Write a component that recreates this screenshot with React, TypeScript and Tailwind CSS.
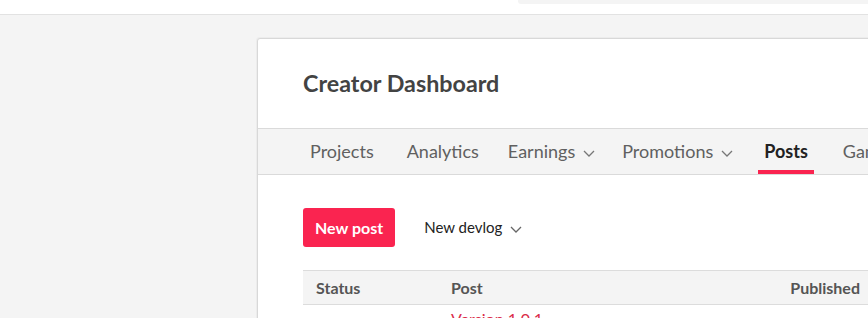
const Chevron = ({ className = "" }: { className?: string }) => (
  <svg width="12" height="7" viewBox="0 0 12 7" className={className} fill="none">
    <polyline points="1,1 6,6 11,1" stroke="currentColor" strokeWidth="1.3" />
  </svg>
);

const navItems = [
  { label: "Projects", space: "ml-0" },
  { label: "Analytics", space: "ml-[21px]" },
  { label: "Earnings", space: "ml-[17px]", menu: true },
  { label: "Promotions", space: "ml-[15px]", menu: true },
  { label: "Posts", space: "ml-[19px]", active: true },
  { label: "Game jams", space: "ml-[23px]" },
];

export default function App() {
  return (
    <div
      className="w-[868px] h-[318px] overflow-hidden bg-[#f4f4f4]"
      style={{ fontFamily: "Lato, 'Liberation Sans', sans-serif" }}
    >
      <header className="h-[15px] bg-white border-b border-[#e2e2e2] flex">
        <div className="ml-[518px] flex-1 h-[4px] bg-[#f4f4f4] rounded-bl-[3px]" />
      </header>

      <section className="ml-[257px] mt-[23px] w-[720px] bg-white border border-[#d8d8d8] rounded-[3px] shadow-[0_0_0_1px_#ececec]">
        <div className="h-[89px] flex items-center pl-[45px]">
          <h1 className="text-[23.3px] font-bold text-[#434343] pb-[1px]">Creator Dashboard</h1>
        </div>

        <nav className="h-[47px] bg-[#f4f4f4] border-y border-[#dadada] flex items-stretch pl-[46px] text-[18px] text-[#606060]">
          {navItems.map((item) => (
            <div
              key={item.label}
              className={`relative flex items-center gap-[8px] px-[6px] whitespace-nowrap ${item.space} ${
                item.active ? "font-bold text-[#222]" : ""
              }`}
            >
              {item.label}
              {item.menu && <Chevron className="text-[#777] mt-[3px]" />}
              {item.active && (
                <span className="absolute left-0 right-0 bottom-0 h-[4px] bg-[#fa2450]" />
              )}
            </div>
          ))}
        </nav>

        <div className="pl-[45px] pt-[33px]">
          <div className="flex items-center gap-[29px]">
            <button className="h-[39px] px-[12px] rounded-[3px] bg-[#fa2450] text-white font-bold text-[16px]">
              New post
            </button>
            <button className="flex items-center gap-[8px] text-[15px] text-[#222]">
              New devlog
              <Chevron className="text-[#666] mt-[3px]" />
            </button>
          </div>

          <table className="mt-[23px] w-[565px] border-collapse text-[16px]">
            <thead>
              <tr className="h-[34px] bg-[#f4f4f4] border-y border-[#dcdcdc] text-[#555] font-bold">
                <th className="text-left font-bold pl-[13px] w-[148px]">Status</th>
                <th className="text-left font-bold">Post</th>
                <th className="text-right font-bold pr-[8px]">Published</th>
              </tr>
            </thead>
            <tbody>
              <tr className="h-[34px]">
                <td />
                <td className="text-[#da2c49] align-top pt-[2px]">Version 1.0.1</td>
                <td />
              </tr>
            </tbody>
          </table>
        </div>
      </section>
    </div>
  );
}
